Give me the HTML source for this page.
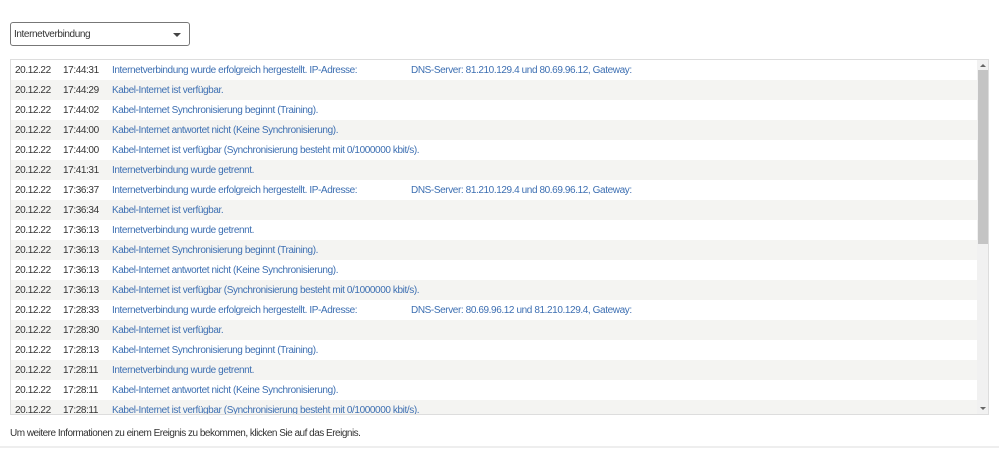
<!DOCTYPE html>
<html><head><meta charset="utf-8"><style>
body{margin:0;width:999px;height:452px;background:#fff;font-family:"Liberation Sans",sans-serif;font-size:10px;letter-spacing:-0.4px;color:#333;position:relative;overflow:hidden}
.sel{position:absolute;left:10px;top:22px;border:1px solid #777;border-radius:3px;box-sizing:border-box;width:180px;height:24px}
.sel span{position:absolute;left:3px;top:6px}
.sel i{position:absolute;right:8px;top:10px;border-left:4px solid transparent;border-right:4px solid transparent;border-top:4px solid #444}
.box{position:absolute;left:10px;top:59px;width:979px;height:356px;border:1px solid #ddd;box-sizing:border-box;overflow:hidden}
.row{position:absolute;left:0;width:967px;height:20px;line-height:20px}
.row:nth-child(even){background:#f4f4f2}
.row span{position:absolute;top:1px;white-space:nowrap}
.d{left:4px}.t{left:52px}.m{left:101px;color:#3d6fb2}.n{left:400px;color:#3d6fb2}
.sb{position:absolute;right:0;top:0;width:11px;height:354px;background:#f1f1f1}
.th{position:absolute;left:1px;top:10px;width:10px;height:174px;background:#c4c4c4}
.sb b{position:absolute;left:3px;width:0;height:0;border-left:3px solid transparent;border-right:3px solid transparent}
.foot{position:absolute;left:10px;top:428px;letter-spacing:-0.5px}
.line{position:absolute;left:0;top:446px;width:999px;height:2px;background:#eee}
</style></head><body>
<div class="sel"><span>Internetverbindung</span><i></i></div>
<div class="box">
<div class="row" style="top:0"><span class="d">20.12.22</span><span class="t">17:44:31</span><span class="m">Internetverbindung wurde erfolgreich hergestellt. IP-Adresse:</span><span class="n">DNS-Server: 81.210.129.4 und 80.69.96.12, Gateway:</span></div>
<div class="row" style="top:20px"><span class="d">20.12.22</span><span class="t">17:44:29</span><span class="m">Kabel-Internet ist verfügbar.</span></div>
<div class="row" style="top:40px"><span class="d">20.12.22</span><span class="t">17:44:02</span><span class="m">Kabel-Internet Synchronisierung beginnt (Training).</span></div>
<div class="row" style="top:60px"><span class="d">20.12.22</span><span class="t">17:44:00</span><span class="m">Kabel-Internet antwortet nicht (Keine Synchronisierung).</span></div>
<div class="row" style="top:80px"><span class="d">20.12.22</span><span class="t">17:44:00</span><span class="m">Kabel-Internet ist verfügbar (Synchronisierung besteht mit 0/1000000 kbit/s).</span></div>
<div class="row" style="top:100px"><span class="d">20.12.22</span><span class="t">17:41:31</span><span class="m">Internetverbindung wurde getrennt.</span></div>
<div class="row" style="top:120px"><span class="d">20.12.22</span><span class="t">17:36:37</span><span class="m">Internetverbindung wurde erfolgreich hergestellt. IP-Adresse:</span><span class="n">DNS-Server: 81.210.129.4 und 80.69.96.12, Gateway:</span></div>
<div class="row" style="top:140px"><span class="d">20.12.22</span><span class="t">17:36:34</span><span class="m">Kabel-Internet ist verfügbar.</span></div>
<div class="row" style="top:160px"><span class="d">20.12.22</span><span class="t">17:36:13</span><span class="m">Internetverbindung wurde getrennt.</span></div>
<div class="row" style="top:180px"><span class="d">20.12.22</span><span class="t">17:36:13</span><span class="m">Kabel-Internet Synchronisierung beginnt (Training).</span></div>
<div class="row" style="top:200px"><span class="d">20.12.22</span><span class="t">17:36:13</span><span class="m">Kabel-Internet antwortet nicht (Keine Synchronisierung).</span></div>
<div class="row" style="top:220px"><span class="d">20.12.22</span><span class="t">17:36:13</span><span class="m">Kabel-Internet ist verfügbar (Synchronisierung besteht mit 0/1000000 kbit/s).</span></div>
<div class="row" style="top:240px"><span class="d">20.12.22</span><span class="t">17:28:33</span><span class="m">Internetverbindung wurde erfolgreich hergestellt. IP-Adresse:</span><span class="n">DNS-Server: 80.69.96.12 und 81.210.129.4, Gateway:</span></div>
<div class="row" style="top:260px"><span class="d">20.12.22</span><span class="t">17:28:30</span><span class="m">Kabel-Internet ist verfügbar.</span></div>
<div class="row" style="top:280px"><span class="d">20.12.22</span><span class="t">17:28:13</span><span class="m">Kabel-Internet Synchronisierung beginnt (Training).</span></div>
<div class="row" style="top:300px"><span class="d">20.12.22</span><span class="t">17:28:11</span><span class="m">Internetverbindung wurde getrennt.</span></div>
<div class="row" style="top:320px"><span class="d">20.12.22</span><span class="t">17:28:11</span><span class="m">Kabel-Internet antwortet nicht (Keine Synchronisierung).</span></div>
<div class="row" style="top:340px"><span class="d">20.12.22</span><span class="t">17:28:11</span><span class="m">Kabel-Internet ist verfügbar (Synchronisierung besteht mit 0/1000000 kbit/s).</span></div>
<div class="sb"><b style="top:4px;border-bottom:3px solid #666"></b><div class="th"></div><b style="bottom:4px;border-top:3px solid #666"></b></div>
</div>
<div class="foot">Um weitere Informationen zu einem Ereignis zu bekommen, klicken Sie auf das Ereignis.</div>
<div class="line"></div>
</body></html>
